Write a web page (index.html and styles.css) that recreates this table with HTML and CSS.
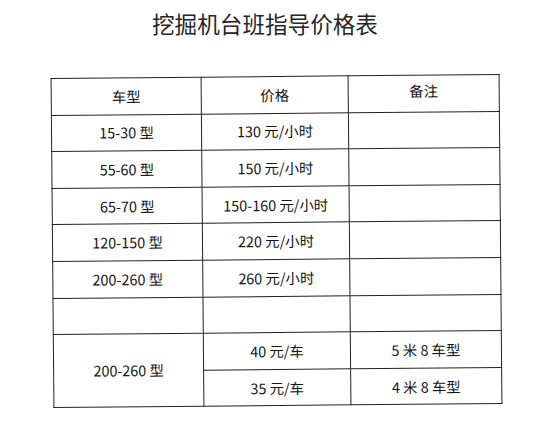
FILE: index.html
```html
<!DOCTYPE html>
<html lang="zh-CN">
<head>
<meta charset="utf-8">
<title>挖掘机台班指导价格表</title>
<link rel="stylesheet" href="styles.css">
</head>
<body>
<div class="page">
  <h1 class="title">挖掘机台班指导价格表</h1>
  <table class="price-table">
    <colgroup>
      <col class="c1"><col class="c2"><col class="c3">
    </colgroup>
    <thead>
      <tr><th>车型</th><th>价格</th><th class="note-head">备注</th></tr>
    </thead>
    <tbody>
      <tr><td>15-30 型</td><td>130 元/小时</td><td></td></tr>
      <tr><td>55-60 型</td><td>150 元/小时</td><td></td></tr>
      <tr><td>65-70 型</td><td>150-160 元/小时</td><td></td></tr>
      <tr><td>120-150 型</td><td>220 元/小时</td><td></td></tr>
      <tr><td>200-260 型</td><td>260 元/小时</td><td></td></tr>
      <tr><td></td><td></td><td></td></tr>
      <tr><td rowspan="2">200-260 型</td><td>40 元/车</td><td>5 米 8 车型</td></tr>
      <tr><td>35 元/车</td><td>4 米 8 车型</td></tr>
    </tbody>
  </table>
</div>
</body>
</html>
```
FILE: styles.css
```css
html, body {
  margin: 0;
  padding: 0;
  background: #ffffff;
}
body {
  width: 552px;
  height: 421px;
  overflow: hidden;
  font-family: "Noto Sans CJK SC", "Noto Sans", sans-serif;
  color: #141414;
}
.page {
  display: flex;
  flex-direction: column;
  align-items: center;
  padding-top: 12px;
}
.title {
  margin: 0 22px 0 0;
  font-size: 22.6px;
  line-height: 24px;
  font-weight: 400;
  color: #262626;
}
.price-table {
  margin-top: 40px;
  border-collapse: collapse;
  width: 448px;
  table-layout: fixed;
  transform: rotate(-0.5deg);
  font-size: 14.4px;
}
.c1 { width: 150px; }
.c2 { width: 147px; }
.c3 { width: 151px; }
.price-table th,
.price-table td {
  border: 1.5px solid #222222;
  height: 35.6px;
  padding: 0;
  text-align: center;
  vertical-align: middle;
  font-weight: 400;
  line-height: 16px;
}
.price-table .note-head {
  vertical-align: top;
  padding-top: 7px;
  height: 28.6px;
}
```
